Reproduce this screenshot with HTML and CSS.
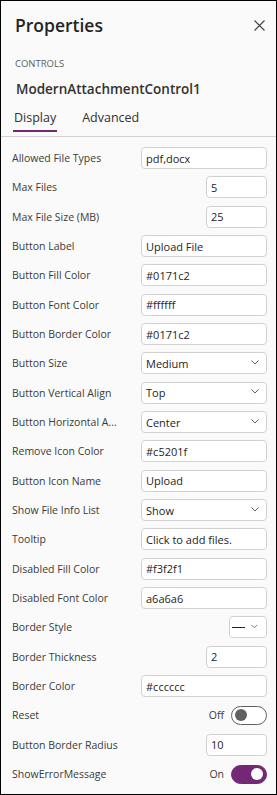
FILE: index.html
```html
<html>
	<head>
		<meta charset="UTF-8">
		<title>Properties</title>
		<link rel="stylesheet" href="styles.css">
	</head>
	<body>
		<div class="panel">
			<div class="head">
				<h1 class="title">Properties</h1>
				<svg class="close" width="11" height="11" viewBox="0 0 11 11"><path d="M0.5 0.5L10.5 10.5M10.5 0.5L0.5 10.5" stroke="#424242" stroke-width="1.1" fill="none"/></svg>
			</div>
			<div class="section">CONTROLS</div>
			<div class="control">ModernAttachmentControl1</div>
			<div class="tabs">
				<div class="tab active">Display</div>
				<div class="tab">Advanced</div>
			</div>
			<div class="rows">
				<div class="row"><label>Allowed File Types</label><div class="box wide">pdf,docx</div></div>
				<div class="row"><label>Max Files</label><div class="box narrow">5</div></div>
				<div class="row"><label>Max File Size (MB)</label><div class="box narrow">25</div></div>
				<div class="row"><label>Button Label</label><div class="box wide">Upload File</div></div>
				<div class="row"><label>Button Fill Color</label><div class="box wide">#0171c2</div></div>
				<div class="row"><label>Button Font Color</label><div class="box wide">#ffffff</div></div>
				<div class="row"><label>Button Border Color</label><div class="box wide">#0171c2</div></div>
				<div class="row"><label>Button Size</label><div class="box wide select">Medium<svg class="chev" width="8" height="5" viewBox="0 0 8 5"><path d="M0.5 0.5L4 4L7.5 0.5" stroke="#616161" fill="none"/></svg></div></div>
				<div class="row"><label>Button Vertical Align</label><div class="box wide select">Top<svg class="chev" width="8" height="5" viewBox="0 0 8 5"><path d="M0.5 0.5L4 4L7.5 0.5" stroke="#616161" fill="none"/></svg></div></div>
				<div class="row"><label title="Button Horizontal Align">Button Horizontal A...</label><div class="box wide select">Center<svg class="chev" width="8" height="5" viewBox="0 0 8 5"><path d="M0.5 0.5L4 4L7.5 0.5" stroke="#616161" fill="none"/></svg></div></div>
				<div class="row"><label>Remove Icon Color</label><div class="box wide">#c5201f</div></div>
				<div class="row"><label>Button Icon Name</label><div class="box wide">Upload</div></div>
				<div class="row"><label>Show File Info List</label><div class="box wide select">Show<svg class="chev" width="8" height="5" viewBox="0 0 8 5"><path d="M0.5 0.5L4 4L7.5 0.5" stroke="#616161" fill="none"/></svg></div></div>
				<div class="row"><label>Tooltip</label><div class="box wide">Click to add files.</div></div>
				<div class="row"><label>Disabled Fill Color</label><div class="box wide">#f3f2f1</div></div>
				<div class="row"><label>Disabled Font Color</label><div class="box wide">a6a6a6</div></div>
				<div class="row"><label>Border Style</label><div class="box style"><span class="line"></span><svg class="chev" width="8" height="5" viewBox="0 0 8 5"><path d="M0.5 0.5L4 4L7.5 0.5" stroke="#616161" fill="none"/></svg></div></div>
				<div class="row"><label>Border Thickness</label><div class="box narrow">2</div></div>
				<div class="row"><label>Border Color</label><div class="box wide">#cccccc</div></div>
				<div class="row"><label>Reset</label><span class="state">Off</span><span class="toggle"><span class="knob"></span></span></div>
				<div class="row"><label>Button Border Radius</label><div class="box narrow">10</div></div>
				<div class="row"><label>ShowErrorMessage</label><span class="state">On</span><span class="toggle on"><span class="knob"></span></span></div>
			</div>
		</div>
	</body>
</html>
```
FILE: styles.css
```css
body {
	margin: 0;
	background: #fff;
	font-family: "Open Sans", "Noto Sans", sans-serif;
	color: #323130;
}
.panel {
	width: 277px;
	height: 795px;
	box-sizing: border-box;
	border: 1px solid #000;
	background: #fafafa;
	overflow: hidden;
}
.head {
	height: 47px;
	display: flex;
	align-items: center;
	justify-content: space-between;
	padding: 0 11px 0 14px;
}
.title {
	margin: 0;
	font-size: 17.5px;
	line-height: 24px;
	font-weight: 600;
	color: #242424;
}
.close { margin-top: 1px; }
.section {
	margin-top: 8px;
	padding-left: 14px;
	font-size: 9.5px;
	line-height: 16px;
	color: #605e5c;
}
.control {
	margin-top: 7px;
	padding-left: 15px;
	font-size: 13.5px;
	line-height: 20px;
	font-weight: 600;
	color: #323130;
}
.tabs {
	margin-top: 9px;
	height: 28px;
	display: flex;
	gap: 24px;
	padding-left: 12px;
	border-bottom: 1px solid #d1d1d1;
}
.tab {
	align-self: flex-start;
	padding: 0 1px 2px;
	font-size: 12.5px;
	line-height: 20px;
	color: #323130;
	border-bottom: 2px solid transparent;
}
.tab.active { border-bottom-color: #742774; }
.rows { padding-top: 6.5px; }
.row {
	height: 29.33px;
	display: flex;
	align-items: center;
	padding: 0 9px 0 11px;
	font-size: 10.5px;
}
.row label {
	flex: 1;
	min-width: 0;
	white-space: nowrap;
	overflow: hidden;
	padding-right: 8px;
	color: #3b3a39;
}
.box {
	height: 22px;
	box-sizing: border-box;
	border: 1px solid #d1d1d1;
	border-radius: 4px;
	background: #fff;
	display: flex;
	align-items: center;
	padding: 0 4px;
	font-size: 11px;
	color: #242424;
	flex-shrink: 0;
}
.wide { width: 126px; }
.narrow { width: 61px; }
.style {
	width: 38px;
	padding: 0 8px 0 2px;
	gap: 6px;
}
.select { justify-content: space-between; padding-right: 7px; }
.chev { margin-top: -2px; }
.line {
	width: 16px;
	height: 1px;
	background: #242424;
}
.state {
	margin-right: 7px;
	font-size: 10.5px;
	color: #3b3a39;
}
.toggle {
	width: 36px;
	height: 19px;
	box-sizing: border-box;
	border: 1px solid #616161;
	border-radius: 10px;
	background: #fff;
	display: flex;
	align-items: center;
	padding: 0 3px;
}
.knob {
	width: 12px;
	height: 12px;
	border-radius: 50%;
	background: #616161;
}
.toggle.on {
	background: #742774;
	border-color: #742774;
	justify-content: flex-end;
}
.toggle.on .knob { background: #fff; }
```
